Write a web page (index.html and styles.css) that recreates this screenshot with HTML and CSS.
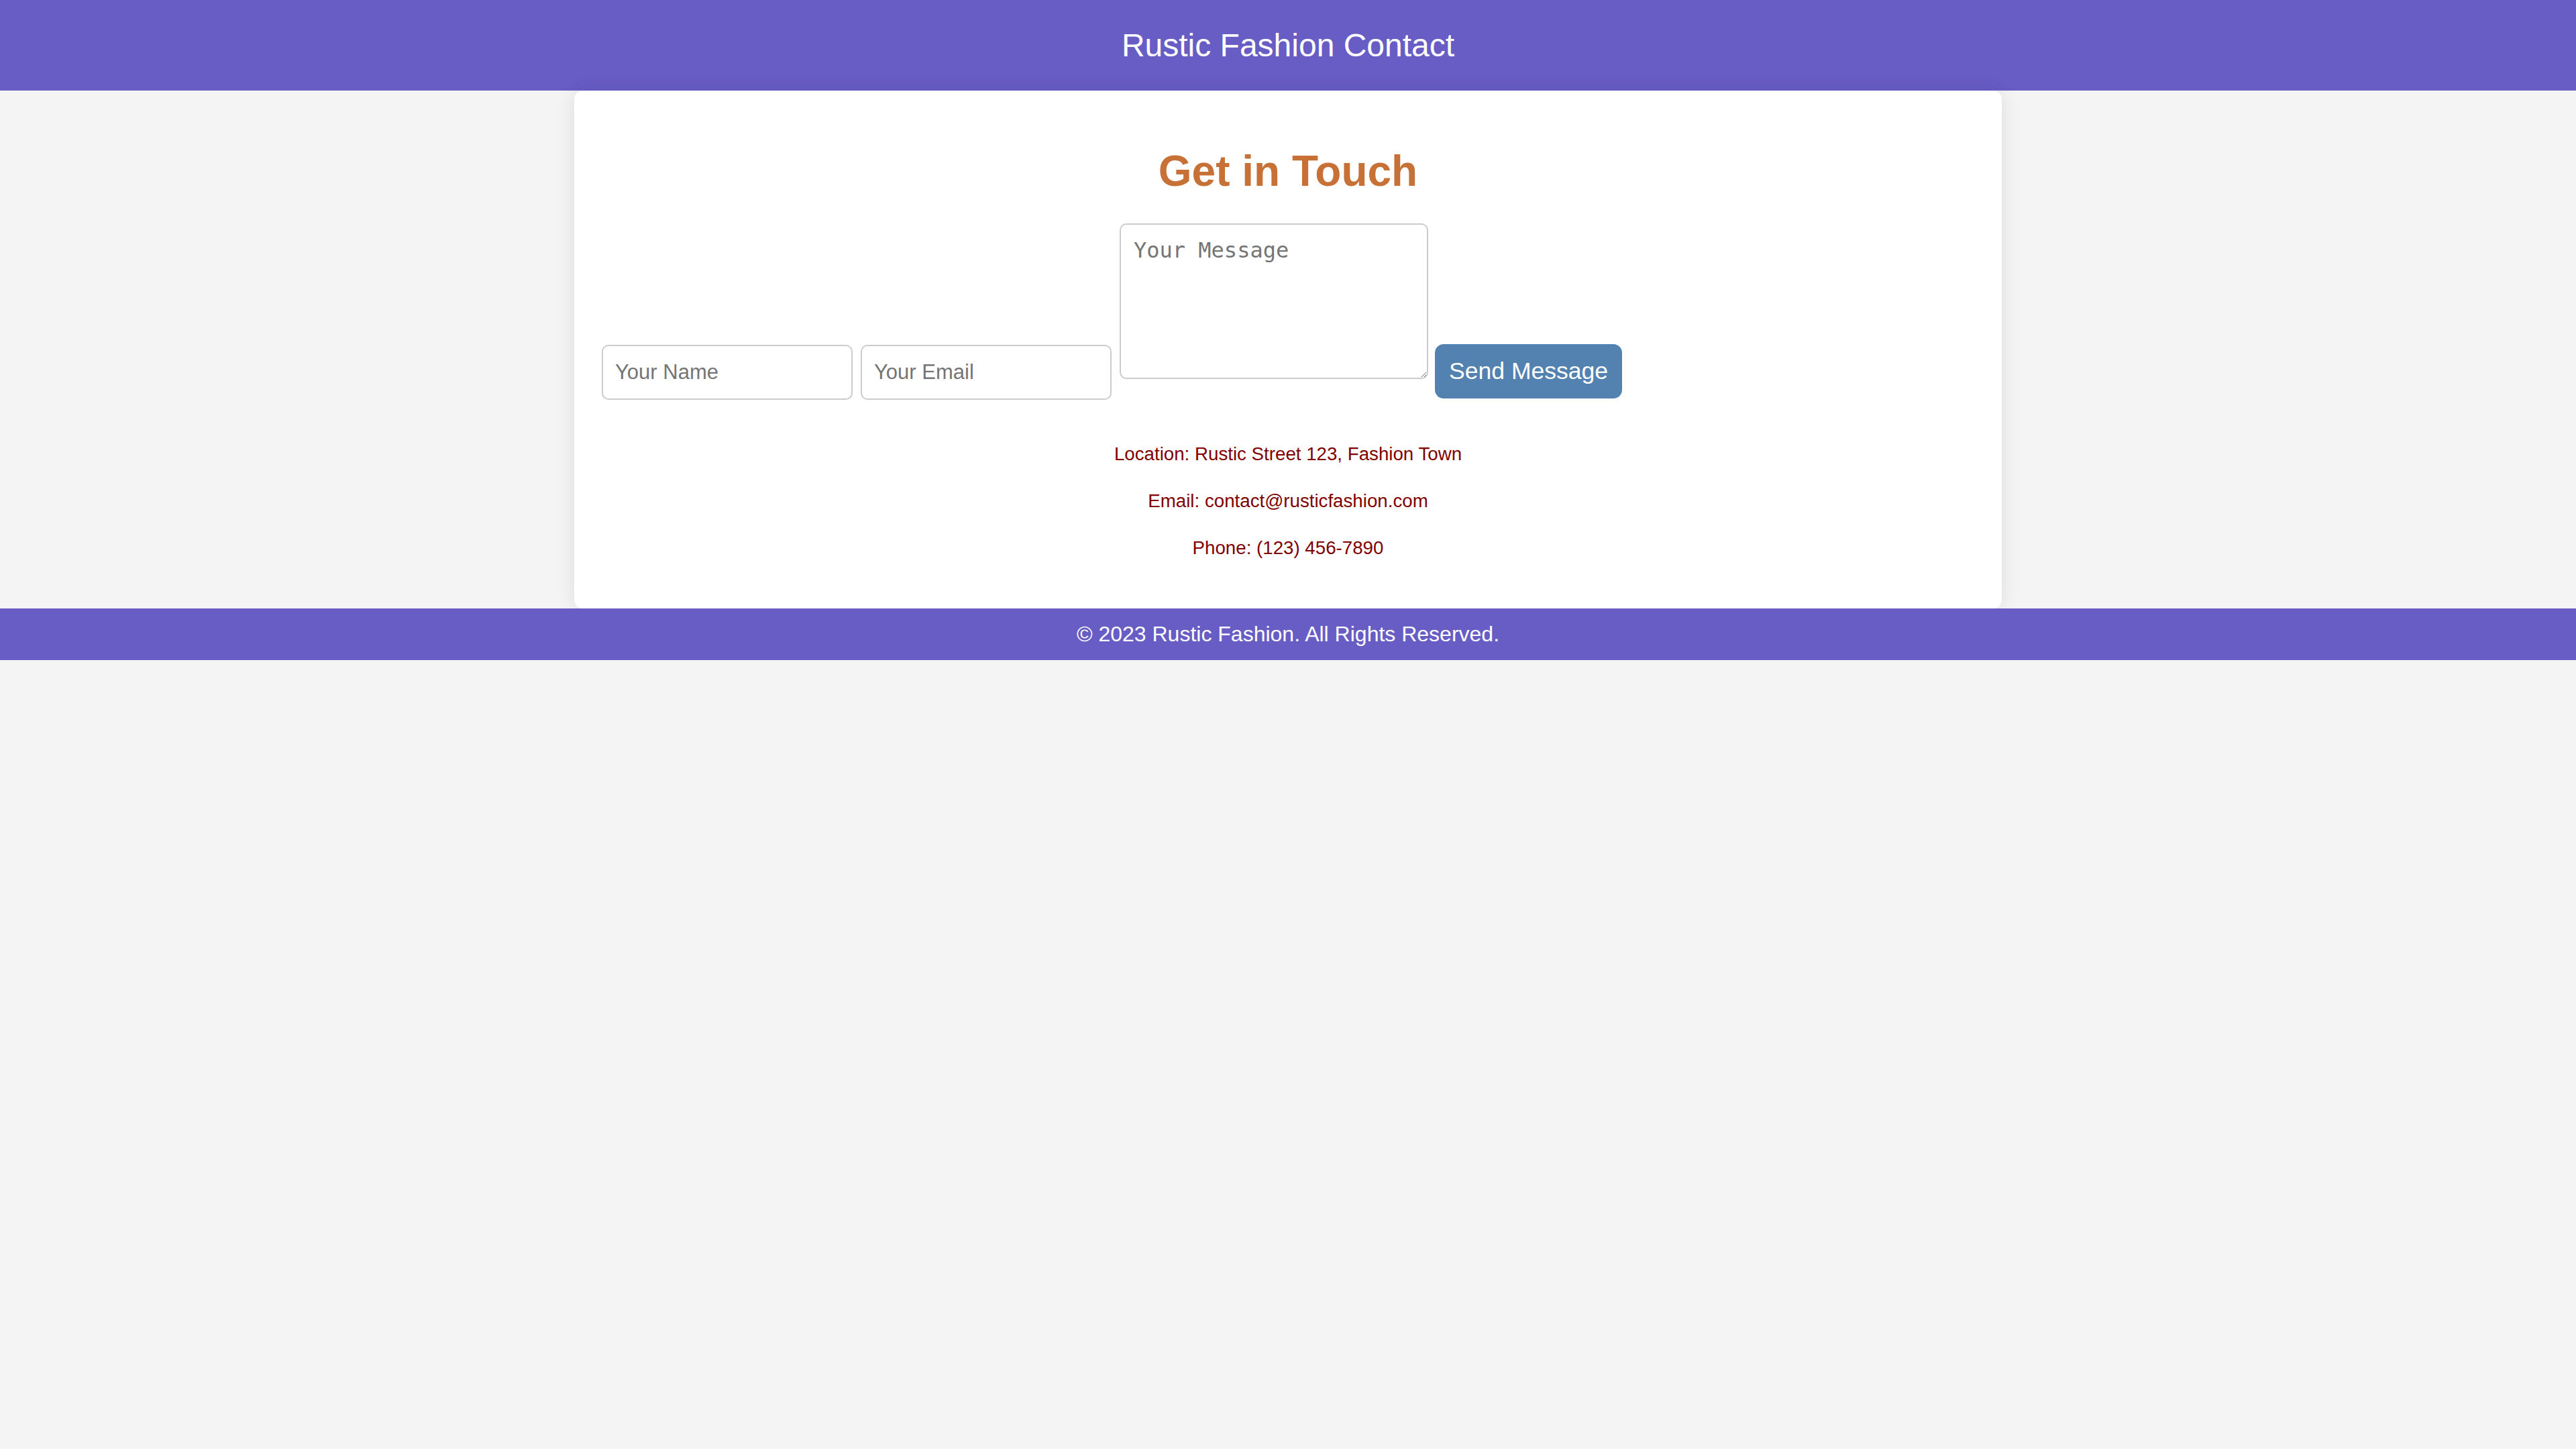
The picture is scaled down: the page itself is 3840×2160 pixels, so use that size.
FILE: index.html
```html
<!DOCTYPE html>
<html lang="en">
<head>
<meta charset="utf-8">
<title>Rustic Fashion Contact</title>
<link rel="stylesheet" href="styles.css">
</head>
<body>
<header class="site-header">
  <h1 class="site-title">Rustic Fashion Contact</h1>
</header>
<main class="card">
  <h2 class="card-title">Get in Touch</h2>
  <form class="contact-form">
    <input class="field field-name" type="text" placeholder="Your Name"><input class="field field-email" type="email" placeholder="Your Email"><textarea class="message" placeholder="Your Message"></textarea><button class="send" type="button">Send Message</button>
  </form>
  <div class="info">
    <p class="info-line">Location: Rustic Street 123, Fashion Town</p>
    <p class="info-line">Email: contact@rusticfashion.com</p>
    <p class="info-line">Phone: (123) 456-7890</p>
  </div>
</main>
<footer class="site-footer">
  <p class="copyright">© 2023 Rustic Fashion. All Rights Reserved.</p>
</footer>
</body>
</html>
```
FILE: styles.css
```css
html, body {
  margin: 0;
  padding: 0;
}

body {
  background: #f4f4f4;
  font-family: "Liberation Sans", Arial, sans-serif;
  color: #333;
}

.site-header {
  background: #685cc5;
  height: 135px;
  text-align: center;
}

.site-title {
  margin: 0;
  font-size: 48px;
  font-weight: normal;
  line-height: 135px;
  color: #ffffff;
}

.card {
  display: block;
  box-sizing: border-box;
  width: 2128px;
  margin: 0 auto;
  padding: 40px 41px 74px;
  background: #ffffff;
  border-radius: 13px;
  box-shadow: 0 0 27px rgba(0, 0, 0, 0.1);
}

.card-title {
  margin: 43px 0 41px;
  font-size: 64px;
  font-weight: bold;
  line-height: 74px;
  color: #c87137;
  text-align: center;
}

.contact-form {
  margin: 0;
  font-size: 0;
  text-align: left;
}

.field {
  box-sizing: border-box;
  width: 374px;
  margin: 0 12px 0 0;
  padding: 21px 18px;
  border: 2px solid #cccccc;
  border-radius: 10px;
  background: #ffffff;
  font-family: "Liberation Sans", Arial, sans-serif;
  font-size: 31px;
  color: #333;
  outline: none;
}

.field::placeholder,
.message::placeholder {
  color: #757575;
}

.message {
  box-sizing: border-box;
  width: 460px;
  height: 232px;
  margin: 0 10px 0 0;
  padding: 19px;
  border: 2px solid #cccccc;
  border-radius: 10px;
  background: #ffffff;
  font-family: "DejaVu Sans Mono", monospace;
  font-size: 32px;
  color: #333;
  outline: none;
}

.send {
  margin: 0;
  padding: 20px 21px;
  border: none;
  border-radius: 13px;
  background: #5482b0;
  color: #ffffff;
  font-family: "Liberation Sans", Arial, sans-serif;
  font-size: 35.56px;
  cursor: pointer;
}

.info {
  margin-top: 65px;
  display: flex;
  flex-direction: column;
  gap: 38px;
  text-align: center;
}

.info-line {
  margin: 0;
  font-size: 27.7px;
  line-height: 32px;
  color: #800000;
}

.site-footer {
  background: #685cc5;
  height: 77px;
  text-align: center;
}

.copyright {
  margin: 0;
  font-size: 32px;
  line-height: 77px;
  color: #ffffff;
}
```
